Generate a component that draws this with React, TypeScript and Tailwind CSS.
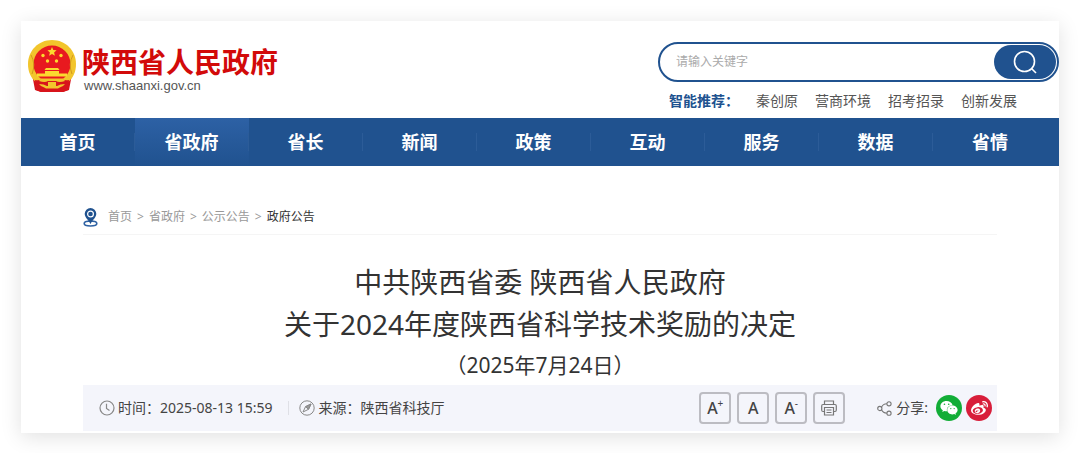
import { FaWeixin, FaWeibo } from 'react-icons/fa';

const quickLinks = ['秦创原', '营商环境', '招考招录', '创新发展'];
const navItems = ['首页', '省政府', '省长', '新闻', '政策', '互动', '服务', '数据', '省情'];
const crumbs = ['首页', '省政府', '公示公告'];
const activeNav = '省政府';

function Emblem() {
  return (
    <svg viewBox="0 0 48 52" className="h-13 w-12 shrink-0" aria-hidden="true">
      <path d="M4 34 L7 50 L13 52 H35 L41 50 L44 34 Z" fill="#d8141b" />
      <path d="M24 0 C38 0 48 11 48 24 C48 32 45 38 40 42 L8 42 C3 38 0 32 0 24 C0 11 10 0 24 0Z" fill="#f2c52c" />
      <circle cx="24" cy="24" r="18.500" fill="#e8191f" />
      <path d="M3 15 Q8 24 4 34 M45 15 Q40 24 44 34" fill="none" stroke="#d39a1c" strokeWidth="1" />
      <path d="M24 7 l1.300 3.100 3.300.2 -2.500 2.100 .8 3.300 -2.900-1.800 -2.900 1.800 .8-3.300 -2.500-2.100 3.300-.2z" fill="#fbd92f" />
      <g fill="#fbd92f">
        <circle cx="15" cy="15.500" r="1.700" />
        <circle cx="33" cy="15.500" r="1.700" />
        <circle cx="19.500" cy="21" r="1.700" />
        <circle cx="28.500" cy="21" r="1.700" />
        <path d="M18 28 h12 l1.500 2 h-15z M17 31 h14 v2.500 h8 v3 h-30 v-3 h8z" />
      </g>
      <path d="M7 40 Q11 41 14 39 H34 Q37 41 41 40 L40 50 L35 52 H13 L8 50 Z" fill="#d8141b" />
      <path d="M13 38.500 H35 L37 41 Q31 43 28 41 H20 Q17 43 11 41 Z" fill="#f2c52c" />
      <path d="M11 44 Q16 44 19 46 H29 Q32 44 37 44 L35 46 Q32 47 30 48.500 H18 Q16 47 13 46 Z" fill="#f2c52c" />
      <path d="M20 42 h8 v5 h-8z" fill="#f2c52c" />
    </svg>
  );
}

function SearchIcon() {
  return (
    <svg viewBox="0 0 24 24" className="size-6" fill="none" stroke="currentColor" strokeWidth="1.600" aria-hidden="true">
      <circle cx="11.500" cy="11.500" r="10" />
      <path d="M18.500 18.500 L23 23" />
    </svg>
  );
}

function PinIcon() {
  return (
    <svg viewBox="0 0 15 19" className="h-[19px] w-[15px]" fill="none" aria-hidden="true">
      <ellipse cx="7.500" cy="15.500" rx="6.300" ry="2.500" stroke="#2f62a3" strokeWidth="1.600" />
      <path d="M7.500 0 a5.800 5.800 0 0 1 5.800 5.800 c0 3.700-3.600 6-5.800 10.200 c-2.200-4.200-5.800-6.500-5.800-10.200 a5.800 5.800 0 0 1 5.800-5.800z" fill="#20528f" />
      <circle cx="7.500" cy="6" r="2.900" stroke="#fff" strokeWidth="1.200" />
    </svg>
  );
}

function ClockIcon() {
  return (
    <svg viewBox="0 0 16 16" className="size-4" fill="none" stroke="#888" strokeWidth="1.200" aria-hidden="true">
      <circle cx="8" cy="8" r="7" />
      <path d="M7.500 3.800 V8.500 L10.500 10.500" />
    </svg>
  );
}

function CompassIcon() {
  return (
    <svg viewBox="0 0 16 16" className="size-4" fill="none" stroke="#888" aria-hidden="true">
      <circle cx="8" cy="8" r="7.200" />
      <path d="M12 4 L9.500 9.300 L4 12 L6.500 6.700 Z" />
      <path d="M12 4 L9.500 9.300 L6.500 6.700 Z" fill="#999" />
    </svg>
  );
}

function PrintIcon() {
  return (
    <svg viewBox="0 0 16 16" className="size-4" fill="none" stroke="#777" strokeWidth="1.200" aria-hidden="true">
      <path d="M3.500 4 V1 H12.500 V4" />
      <path d="M3.500 11.500 H2 Q.7 11.500 .7 10 V6 Q.7 4.500 2 4.500 H14 Q15.300 4.500 15.300 6 V10 Q15.300 11.500 14 11.500 H12.500" />
      <path d="M3.500 7.500 H12.500 V15 H3.500 Z M5.500 10 H10.500 M5.500 12.500 H10.500" />
    </svg>
  );
}

function ShareIcon() {
  return (
    <svg viewBox="0 0 15 15" className="size-[15px]" fill="none" stroke="#777" strokeWidth="1.100" aria-hidden="true">
      <circle cx="2.800" cy="7.500" r="2.100" />
      <circle cx="12" cy="2.800" r="2.100" />
      <circle cx="12" cy="12.200" r="2.100" />
      <path d="M4.500 6.200 Q6 3 9.900 2.800 M4.500 8.800 Q6 12 9.900 12.200" />
    </svg>
  );
}

function Header() {
  return (
    <header className="flex justify-between pl-[7px]">
      <a href="#" className="flex items-start gap-[6px] pt-[19px]">
        <Emblem />
        <span className="flex flex-col pt-1">
          <span className="text-[28px] leading-9 font-bold text-[#d20a0a]">陕西省人民政府</span>
          <span className="pl-[2px] font-['Liberation_Sans',sans-serif] text-[13px] leading-3 text-[#555]">
            www.shaanxi.gov.cn
          </span>
        </span>
      </a>

      <div className="w-[401px] pt-[21px]">
        <form className="flex h-10 rounded-full border-2 border-[#20528f] p-px">
          <input
            type="text"
            aria-label="关键字"
            placeholder="请输入关键字"
            className="min-w-0 flex-1 bg-transparent pl-[15px] text-xs leading-6 placeholder:text-[#aaa] focus:outline-none"
          />
          <button
            type="button"
            aria-label="搜索"
            className="flex w-[62px] items-center justify-center rounded-full bg-[#20528f] text-white"
          >
            <SearchIcon />
          </button>
        </form>
        <div className="flex gap-[17px] pt-[9px] pb-[7px] pl-[11px] text-sm text-[#555]">
          <span className="font-bold text-[#20528f]">智能推荐：</span>
          {quickLinks.map((link) => (
            <a key={link} href="#">{link}</a>
          ))}
        </div>
      </div>
    </header>
  );
}

function MainNav() {
  return (
    <nav className="grid h-12 grid-cols-9 bg-[#20528f] pr-3 text-lg font-bold text-white">
      {navItems.map((item, i) => (
        <a
          key={item}
          href="#"
          className={
            item === activeNav
              ? 'flex items-center bg-linear-to-b from-[#2d61a5] to-[#20528f]'
              : 'flex items-center'
          }
        >
          <span
            className={
              i < navItems.length - 1
                ? 'flex-1 border-r border-[#2c5c98] text-center leading-[18px]'
                : 'flex-1 text-center leading-[18px]'
            }
          >
            {item}
          </span>
        </a>
      ))}
    </nav>
  );
}

function Breadcrumb() {
  return (
    <div className="flex h-[35px] items-center border-b border-[#f5f5f5] text-xs text-[#999]">
      <PinIcon />
      <div className="flex gap-[5px] pl-[10px]">
        {crumbs.map((crumb) => (
          <span key={crumb} className="flex gap-[5px]">
            <a href="#">{crumb}</a>
            <span>&gt;</span>
          </span>
        ))}
        <span className="text-[#333]">政府公告</span>
      </div>
    </div>
  );
}

function InfoBar() {
  const toolButton =
    'flex h-8 w-8 items-center justify-center rounded border-2 border-[#bcbcc2] text-base font-medium text-[#444]';

  return (
    <div className="flex h-[46px] items-center justify-between bg-[#f4f5fb] pr-[5px] pl-4 text-sm text-[#444]">
      <div className="flex items-center">
        <ClockIcon />
        <span className="pl-[3px]">时间：2025-08-13 15:59</span>
        <span className="mr-[10px] ml-[15px] h-[14px] w-px bg-[#dfe0e6]" />
        <CompassIcon />
        <span className="pl-1">来源：陕西省科技厅</span>
      </div>

      <div className="flex items-center">
        <div className="flex gap-[6px]">
          <button type="button" aria-label="放大字体" className={toolButton}>
            A<sup className="text-[10px] font-normal">+</sup>
          </button>
          <button type="button" aria-label="默认字体" className={toolButton}>A</button>
          <button type="button" aria-label="缩小字体" className={toolButton}>
            A<sup className="text-[10px] font-normal">-</sup>
          </button>
          <button type="button" aria-label="打印" className={toolButton}>
            <PrintIcon />
          </button>
        </div>
        <div className="flex items-center gap-1 pl-8">
          <ShareIcon />
          <span className="pr-1">分享:</span>
          <a
            href="#"
            aria-label="微信"
            className="flex size-[26px] items-center justify-center rounded-full bg-[#12ad37] text-white"
          >
            <FaWeixin size={18} />
          </a>
          <a
            href="#"
            aria-label="微博"
            className="flex size-[26px] items-center justify-center rounded-full bg-[#d81e3a] text-white"
          >
            <FaWeibo size={17} />
          </a>
        </div>
      </div>
    </div>
  );
}

export default function App() {
  return (
    <div className="bg-white p-[21px] pb-5 font-['Noto_Sans','Noto_Sans_CJK_SC',sans-serif]">
      <div className="bg-white pb-[2px] shadow-[0_4px_20px_rgba(0,0,0,0.12)]">
        <Header />
        <MainNav />
        <main className="px-[62px] pt-[34px]">
          <Breadcrumb />
          <h1 className="pt-[26px] text-center text-[28px] leading-[42px] text-[#333]">
            中共陕西省委 陕西省人民政府
            <br />
            关于2024年度陕西省科学技术奖励的决定
          </h1>
          <p className="text-center text-[21px] leading-10 text-[#333]">（2025年7月24日）</p>
          <InfoBar />
        </main>
      </div>
    </div>
  );
}
